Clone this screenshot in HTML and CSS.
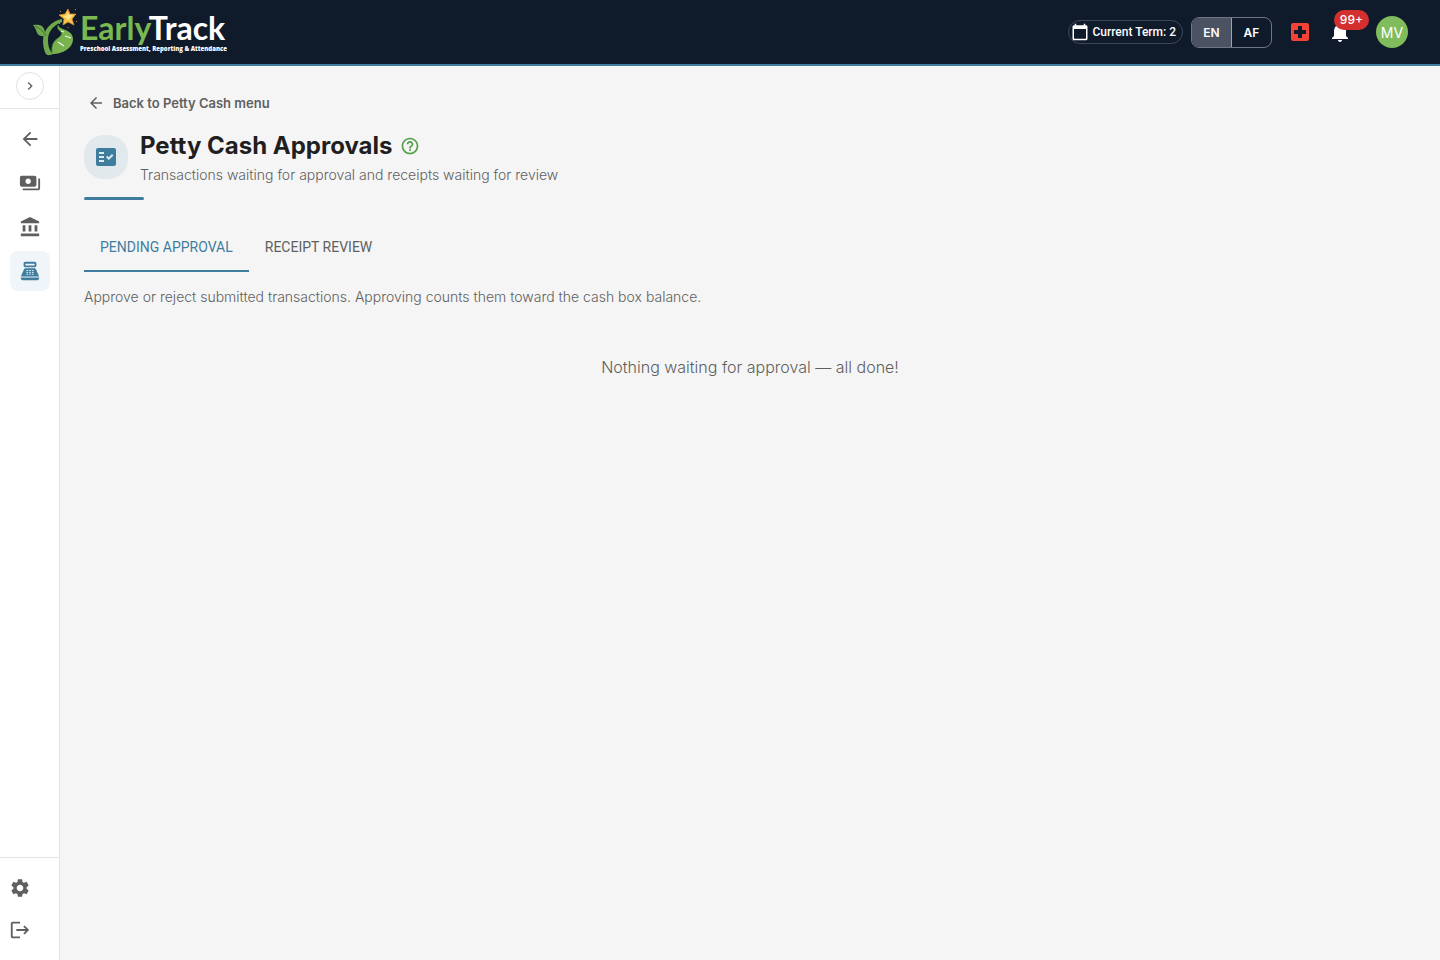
FILE: index.html
```html
<!DOCTYPE html>
<html lang="en">
<head>
<meta charset="utf-8">
<meta name="viewport" content="width=device-width, initial-scale=1">
<title>Petty Cash Approvals - EarlyTrack</title>
<link rel="stylesheet" href="styles.css">
</head>
<body>
<header class="topbar">
  <a class="brand" href="#">
    <svg class="brand-mark" viewBox="0 0 46 50" aria-hidden="true">
      <path d="M30 12C19 14 11 23 11 34c0 5 1 10 3 13 2 2 5 1 7 0-4-4-5-9-5-14 0-9 6-15 14-18z" fill="#6fa84a"/>
      <path d="M1 18c5-1 10 0 11 4 1 2 1 4 2 7-7 1-9-2-10-6-1-2-2-4-3-5z" fill="#6fa84a"/>
      <path d="M3 19c5 2 8 5 11 10" fill="none" stroke="#33692f" stroke-width=".8"/>
      <path d="M26 18c-1 3 0 5 3 7 1 2 0 4-3 6-5 3-7 8-6 16 11 0 21-6 21-15 0-6-5-8-10-10-3-1-4-2-5-4z" fill="#79b350"/>
      <path d="M26 18c-1 3 0 5 3 7 1 2 0 4-3 6-5 3-7 8-6 15" fill="none" stroke="#33692f" stroke-width=".8"/>
      <path d="M26 35l6 4M33 29l6 2M29 24l3 1" stroke="#eef3e9" stroke-width="1.3"/>
      <path d="M36 2l2 5 6 0-4 5 2 6-6-3-5 3 1-6-5-4 6-1z" fill="#f9c449" stroke="#d98f27" stroke-width=".7"/>
      <path d="M36 5l1 3 4 0-3 3-2 2-2-2-3-2 4-1z" fill="#ffe58a"/>
      <path d="M28 4l1 1M43 3l1-1M44 14l1 1M36 20v1M28 16l-1 1" stroke="#c98b2c" stroke-width="1"/>
    </svg>
    <span class="brand-text">
      <span class="brand-name"><span class="brand-early">Early</span>Track</span>
      <span class="brand-tag">Preschool Assessment, Reporting &amp; Attendance</span>
    </span>
  </a>
  <div class="actions">
    <button class="term" type="button">
      <svg class="icon-18" viewBox="0 0 24 24" aria-hidden="true"><path d="M20 3h-1V1h-2v2H7V1H5v2H4c-1.100 0-2 .9-2 2v16c0 1.100.9 2 2 2h16c1.100 0 2-.9 2-2V5c0-1.100-.9-2-2-2m0 18H4V8h16z"/></svg>
      Current Term: 2
    </button>
    <div class="langs" role="group" aria-label="Language">
      <button class="lang lang-on" type="button" aria-pressed="true">EN</button>
      <button class="lang" type="button" aria-pressed="false">AF</button>
    </div>
    <button class="round-btn emergency" type="button" aria-label="Emergency">
      <svg class="icon-24" viewBox="0 0 24 24" aria-hidden="true"><path d="M19 3H5c-1.100 0-2 .9-2 2v14c0 1.100.9 2 2 2h14c1.100 0 2-.9 2-2V5c0-1.100-.9-2-2-2m-1 11h-4v4h-4v-4H6v-4h4V6h4v4h4z"/></svg>
    </button>
    <button class="round-btn" type="button" aria-label="Notifications">
      <svg class="icon-24" viewBox="0 0 24 24" aria-hidden="true"><path d="M12 22c1.100 0 2-.9 2-2h-4c0 1.100.89 2 2 2m6-6v-5c0-3.070-1.640-5.640-4.500-6.320V4c0-.83-.67-1.500-1.500-1.500s-1.500.67-1.500 1.500v.68C7.630 5.360 6 7.920 6 11v5l-2 2v1h16v-1z"/></svg>
      <span class="badge">99+</span>
    </button>
    <button class="avatar" type="button" aria-label="Account MV">MV</button>
  </div>
</header>
<div class="shell">
  <aside class="sidebar">
    <div class="side-top">
      <button class="expand" type="button" aria-label="Expand sidebar">
        <svg class="icon-16" viewBox="0 0 24 24" aria-hidden="true"><path d="M10 6 8.590 7.410 13.170 12l-4.580 4.590L10 18l6-6z"/></svg>
      </button>
    </div>
    <nav class="side-nav" aria-label="Main">
      <a class="side-link" href="#" aria-label="Back"><svg class="icon-22" viewBox="0 0 24 24"><path d="M20 11H7.830l5.590-5.590L12 4l-8 8 8 8 1.410-1.410L7.830 13H20z"/></svg></a>
      <a class="side-link" href="#" aria-label="Payments"><svg class="icon-22" viewBox="0 0 24 24"><path d="M19 14V6c0-1.100-.9-2-2-2H3c-1.100 0-2 .9-2 2v8c0 1.100.9 2 2 2h14c1.100 0 2-.9 2-2m-9-1c-1.660 0-3-1.340-3-3s1.340-3 3-3 3 1.340 3 3-1.340 3-3 3m13-6v11c0 1.100-.9 2-2 2H4v-2h17V7z"/></svg></a>
      <a class="side-link" href="#" aria-label="Bank"><svg class="icon-22" viewBox="0 0 24 24"><path d="M4 10h3v7H4zM10.500 10h3v7h-3zM2 19h20v3H2zM17 10h3v7h-3zM12 1 2 6v2h20V6z"/></svg></a>
      <a class="side-link side-current" href="#" aria-label="Petty Cash" aria-current="page"><svg class="icon-22" viewBox="0 0 24 24"><path d="M17 2H7c-1.100 0-2 .9-2 2v2c0 1.100.9 2 2 2h10c1.100 0 2-.9 2-2V4c0-1.100-.9-2-2-2m0 4H7V4h10zM20 22H4c-1.100 0-2-.9-2-2v-1h20v1c0 1.100-.9 2-2 2M18.530 10.190C18.210 9.470 17.490 9 16.700 9H7.300c-.79 0-1.510.47-1.830 1.190L2 18h20z"/><path class="keys" d="M8.500 11.500h1M11.500 11.500h1M14.500 11.500h1M8.500 13.500h1M11.500 13.500h1M14.500 13.500h1M8.500 15.500h1M11.500 15.500h1M14.500 15.500h1"/></svg></a>
    </nav>
    <div class="side-foot">
      <button class="foot-btn" type="button" aria-label="Settings"><svg class="icon-22" viewBox="0 0 24 24"><path d="M19.140 12.940c.04-.3.060-.61.060-.94 0-.32-.02-.64-.07-.94l2.030-1.580c.18-.14.230-.41.120-.61l-1.920-3.320c-.12-.22-.37-.29-.59-.22l-2.390.96c-.5-.38-1.030-.7-1.620-.94l-.36-2.540c-.04-.24-.24-.41-.48-.41h-3.840c-.24 0-.43.17-.47.41l-.36 2.540c-.59.24-1.130.57-1.620.94l-2.390-.96c-.22-.08-.47 0-.59.22L2.740 8.870c-.12.21-.08.470.12.610l2.030 1.580c-.05.3-.09.630-.09.940s.02.640.070.940l-2.030 1.580c-.18.14-.23.410-.12.610l1.920 3.320c.12.220.37.290.59.220l2.390-.96c.5.380 1.030.7 1.620.94l.36 2.540c.05.240.24.410.48.410h3.840c.24 0 .44-.17.470-.41l.36-2.540c.59-.24 1.130-.56 1.620-.94l2.390.96c.22.080.47 0 .59-.22l1.920-3.320c.12-.22.070-.47-.12-.61zM12 15.600c-1.980 0-3.600-1.620-3.600-3.600s1.620-3.600 3.600-3.600 3.600 1.620 3.600 3.600-1.620 3.600-3.600 3.600"/></svg></button>
      <button class="foot-btn" type="button" aria-label="Log out"><svg class="icon-22" viewBox="0 0 24 24"><path d="m17 7-1.410 1.410L18.170 11H8v2h10.170l-2.580 2.580L17 17l5-5zM4 5h8V3H4c-1.100 0-2 .9-2 2v14c0 1.100.9 2 2 2h8v-2H4z"/></svg></button>
    </div>
  </aside>
  <main class="content">
    <a class="back" href="#">
      <svg class="icon-18" viewBox="0 0 24 24" aria-hidden="true"><path d="M20 11H7.830l5.590-5.590L12 4l-8 8 8 8 1.410-1.410L7.830 13H20z"/></svg>
      Back to Petty Cash menu
    </a>
    <div class="page-head">
      <span class="page-icon"><svg class="icon-24" viewBox="0 0 24 24" aria-hidden="true"><path d="M20 3H4c-1.100 0-2 .9-2 2v14c0 1.100.9 2 2 2h16c1.100 0 2-.9 2-2V5c0-1.100-.9-2-2-2M10 17H5v-2h5zm0-4H5v-2h5zm0-4H5V7h5zm4.820 6L12 12.160l1.410-1.410 1.410 1.420L17.990 9l1.420 1.420z"/></svg></span>
      <div class="page-titles">
        <div class="title-row">
          <h1 class="title">Petty Cash Approvals</h1>
          <button class="help" type="button" aria-label="Help"><svg class="icon-20" viewBox="0 0 24 24"><path d="M11 18h2v-2h-2zm1-16C6.480 2 2 6.480 2 12s4.480 10 10 10 10-4.480 10-10S17.520 2 12 2m0 18c-4.410 0-8-3.590-8-8s3.590-8 8-8 8 3.590 8 8-3.590 8-8 8m0-14c-2.210 0-4 1.790-4 4h2c0-1.100.9-2 2-2s2 .9 2 2c0 2-3 1.750-3 5h2c0-2.250 3-2.500 3-5 0-2.210-1.790-4-4-4"/></svg></button>
        </div>
        <p class="subtitle">Transactions waiting for approval and receipts waiting for review</p>
      </div>
    </div>
    <div class="accent"></div>
    <div class="tabs" role="tablist">
      <button class="tab tab-on" type="button" role="tab" aria-selected="true">PENDING APPROVAL</button>
      <button class="tab" type="button" role="tab" aria-selected="false">RECEIPT REVIEW</button>
    </div>
    <p class="note">Approve or reject submitted transactions. Approving counts them toward the cash box balance.</p>
    <p class="empty">Nothing waiting for approval — all done!</p>
  </main>
</div>
</body>
</html>
```
FILE: styles.css
```css
* { box-sizing: border-box; }
body {
  margin: 0;
  min-height: 100vh;
  display: flex;
  flex-direction: column;
  background: #f5f5f5;
  color: #5f5f5f;
  font-family: Inter, "Open Sans", sans-serif;
  font-size: 14px;
  font-weight: 300;
}
button {
  padding: 0;
  border: 0;
  background: none;
  color: inherit;
  font: inherit;
  cursor: pointer;
}
a { color: inherit; text-decoration: none; }
h1, p { margin: 0; }
svg { display: block; flex: none; fill: currentColor; }
.icon-16 { width: 16px; height: 16px; }
.icon-18 { width: 18px; height: 18px; }
.icon-20 { width: 20px; height: 20px; }
.icon-22 { width: 22px; height: 22px; }
.icon-24 { width: 24px; height: 24px; }

.topbar {
  display: flex;
  align-items: center;
  justify-content: space-between;
  height: 66px;
  padding: 0 32px;
  border-bottom: 2px solid #3f7d9f;
  background: #0f1a2b;
  color: #fff;
}
.brand { display: flex; align-items: center; gap: 2px; }
.brand-mark { width: 46px; height: 50px; }
.brand-text { display: flex; flex-direction: column; }
.brand-name {
  font-family: Lato, sans-serif;
  font-weight: 700;
  font-size: 32px;
  line-height: 34px;
}
.brand-early { color: #7ab850; }
.brand-tag {
  font-family: "Open Sans", sans-serif;
  font-weight: 800;
  font-size: 6px;
  line-height: 8px;
}
.actions { display: flex; align-items: center; }
.term {
  display: flex;
  align-items: center;
  gap: 3px;
  height: 24px;
  margin-right: 8px;
  padding: 0 6px 0 2px;
  border: 1px solid #3e4756;
  border-radius: 12px;
  font-family: Roboto, sans-serif;
  font-size: 12px;
  font-weight: 500;
}
.langs {
  display: flex;
  height: 31px;
  margin-right: 8px;
  border: 1px solid #6f7681;
  border-radius: 8px;
  overflow: hidden;
}
.lang { width: 39px; font-size: 12px; font-weight: 600; }
.lang-on { width: 40px; border-right: 1px solid #a0a5ad; background: #4b5363; }
.round-btn {
  position: relative;
  display: flex;
  align-items: center;
  justify-content: center;
  width: 40px;
  height: 40px;
}
.emergency { color: #f44336; }
.badge {
  position: absolute;
  top: -2px;
  right: -9px;
  height: 20px;
  padding: 0 6px;
  border-radius: 10px;
  background: #d32f2f;
  font-size: 12px;
  font-weight: 500;
  line-height: 20px;
}
.avatar {
  width: 32px;
  height: 32px;
  margin-left: 16px;
  border-radius: 50%;
  background: #80bc5c;
  font-size: 14px;
  font-weight: 400;
}

.shell { display: flex; flex: 1; }
.sidebar {
  display: flex;
  flex-direction: column;
  width: 60px;
  flex: none;
  border-right: 1px solid #e4e4e4;
  background: #fff;
}
.side-top {
  display: flex;
  justify-content: center;
  padding: 6px 0 8px;
  border-bottom: 1px solid #e4e4e4;
}
.expand {
  display: grid;
  place-items: center;
  width: 28px;
  height: 28px;
  border: 1px solid #e0e0e0;
  border-radius: 50%;
}
.side-nav {
  display: flex;
  flex-direction: column;
  align-items: center;
  gap: 4px;
  padding-top: 10px;
}
.side-link {
  display: grid;
  place-items: center;
  width: 40px;
  height: 40px;
  border-radius: 8px;
}
.side-current { background: #f0f5f9; color: #3f7d9f; }
.keys { stroke: #f0f5f9; stroke-width: 1; stroke-linecap: round; }
.side-foot {
  display: flex;
  flex-direction: column;
  gap: 2px;
  margin-top: auto;
  padding: 10px 0;
  border-top: 1px solid #e4e4e4;
}
.foot-btn {
  display: grid;
  place-items: center;
  width: 40px;
  height: 40px;
}

.content { flex: 1; min-width: 0; padding: 24px; }
.back {
  display: flex;
  align-items: center;
  gap: 8px;
  width: fit-content;
  height: 26px;
  padding: 0 3px;
  font-size: 13px;
  font-weight: 600;
}
.page-head { display: flex; align-items: center; gap: 12px; margin-top: 12px; }
.page-icon {
  display: grid;
  place-items: center;
  width: 44px;
  height: 44px;
  flex: none;
  border-radius: 20px;
  background: #e1e9ed;
  color: #3f7d9f;
}
.title-row { display: flex; align-items: center; gap: 8px; }
.title {
  color: #1f1f1f;
  font-size: 24px;
  font-weight: 700;
  line-height: 36px;
}
.help { color: #4f9f47; }
.subtitle { line-height: 22px; }
.accent {
  width: 60px;
  height: 3px;
  margin-top: 11px;
  border-radius: 2px;
  background: #3f7d9f;
}
.tabs { display: flex; margin-top: 24px; }
.tab {
  height: 48px;
  padding: 0 16px;
  border-bottom: 2px solid transparent;
  font-family: Roboto, sans-serif;
  font-weight: 400;
}
.tab-on { border-color: #3f7d9f; color: #3f7d9f; }
.note { margin-top: 15px; line-height: 20px; }
.empty { margin-top: 48px; font-size: 16px; line-height: 24px; text-align: center; }
```
